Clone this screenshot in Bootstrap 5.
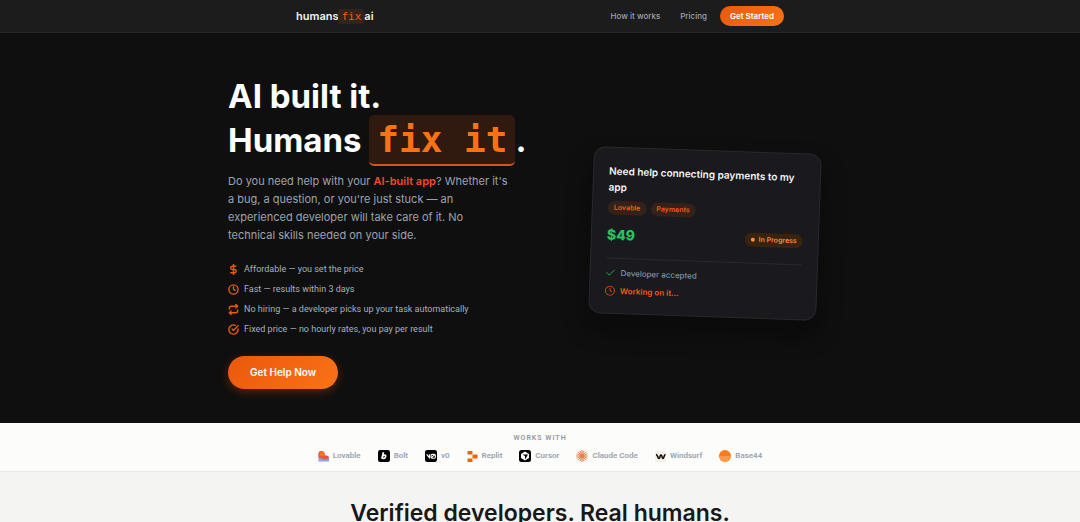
<!DOCTYPE html>
<html lang="en">
<head>
<meta charset="utf-8">
<meta name="viewport" content="width=device-width, initial-scale=1">
<title>humans fix ai</title>
<link href="https://cdn.jsdelivr.net/npm/bootstrap@5.3.0/dist/css/bootstrap.min.css" rel="stylesheet">
<style>
  body { font-family: Inter, "Liberation Sans", sans-serif; font-size: 9px; background: #f4f4f2; color: #18181b; }
  svg { flex: none; }
  .mono { font-family: "DejaVu Sans Mono", monospace; font-weight: 700; }
  .topbar { background: #1c1c1c; border-bottom: 1px solid #262626; height: 33px; }
  .topbar-inner { max-width: 488px; }
  .brand { color: #f1f1f1; font-size: 11px; font-weight: 600; line-height: 16px; text-decoration: none; }
  .brand .mono { color: #f9590f; background: #33231b; border-radius: 3px; padding: 1px 3px; font-weight: 400; }
  .topbar .nav-link { color: #a1a1aa; font-size: 8px; line-height: 12px; font-weight: 500; padding: 0; }
  .topbar .nav-links { column-gap: 20px; margin-right: 13px; }
  .cta { color: #fff; font-weight: 600; border: 0; border-radius: 99px; background: linear-gradient(135deg, #ea580c, #f97316); }
  .cta:hover { color: #fff; background: #ea580c; }
  .cta-nav { font-size: 8px; line-height: 12px; padding: 4px 10px; }
  .cta-main { font-size: 10px; line-height: 15px; padding: 9px 22px; box-shadow: 0 3px 10px rgba(234, 88, 12, .3); }
  .hero { background: #0f0f0f; padding: 41px 0 34px; }
  .hero-inner { max-width: 624px; }
  .hero-inner .row { --bs-gutter-x: 36px; }
  .hero h1 { color: #fff; font-size: 33px; line-height: 44px; font-weight: 700; margin-bottom: 10px; }
  .hero h1 .mono { font-size: 36px; color: #f97316; background: #30190f; border-bottom: 2px solid #d9541a; border-radius: 5px; padding: 4px 8px; }
  .intro { color: #9ca3af; font-size: 11px; line-height: 18px; margin-bottom: 15px; padding-right: 12px; }
  .intro a { color: #f04a2a; font-weight: 600; text-decoration: none; }
  .points { font-family: Roboto, Inter, sans-serif; font-weight: 400; color: #a5afbd; font-size: 9px; line-height: 20px; margin-bottom: 17px; }
  .points li, .steps > div { display: flex; align-items: center; gap: 5px; }
  .points svg, .steps svg { fill: none; stroke-width: 2; stroke-linecap: round; stroke-linejoin: round; }
  .points svg { stroke: #ea580c; stroke-width: 3; }
  .task { width: 228px; padding: 15px; margin-top: 4px; background: #1a1a1e; border: 1px solid #29292d; border-radius: 12px; transform: rotate(2deg); box-shadow: 0 14px 20px 6px rgba(0, 0, 0, .28); }
  .task h2 { color: #f4f4f5; font-size: 10px; line-height: 16px; font-weight: 600; margin-bottom: 6px; }
  .pill { color: #f9590f; background: #33211a; border-radius: 99px; font-size: 7px; line-height: 14px; font-weight: 600; padding: 0 6px; }
  .pill-state { color: #fb8c2c; background: #38230f; }
  .dot { width: 4px; height: 4px; border-radius: 50%; background: #fb923c; }
  .price-row { margin-top: 10px; }
  .price { color: #22c55e; font-size: 14px; line-height: 20px; font-weight: 800; }
  .steps { border-top: 1px solid #29292d; margin-top: 13px; padding-top: 7px; color: #94a3b8; font-size: 8px; line-height: 14px; }
  .steps .now { color: #f9590f; font-weight: 600; margin-top: 4px; }
  .tools { background: #fcfcfa; border-bottom: 1px solid #e8e8e6; padding: 9px 0; }
  .tools h2 { font-family: Roboto, Inter, sans-serif; color: #9299a3; font-size: 7px; line-height: 12px; font-weight: 600; letter-spacing: 1px; margin-bottom: 6px; }
  .tools ul { font-family: Roboto, Inter, sans-serif; color: #9aa3af; font-size: 8px; line-height: 12px; font-weight: 600; column-gap: 17px; }
  .tools li { gap: 4px; }
  .people { padding: 24px 0 48px; }
  .people h2 { font-size: 23px; line-height: 34px; font-weight: 600; color: #18181b; margin: 0; }
</style>
</head>
<body>
<header class="topbar">
  <div class="topbar-inner container-fluid px-0 h-100 d-flex align-items-center">
    <a class="brand me-auto" href="#">humans<span class="mono">fix</span>ai</a>
    <nav class="nav-links d-flex align-items-center">
      <a class="nav-link" href="#how">How it works</a>
      <a class="nav-link" href="#pricing">Pricing</a>
    </nav>
    <button type="button" class="btn cta cta-nav">Get Started</button>
  </div>
</header>

<main>
  <section class="hero">
    <div class="container-fluid px-0 hero-inner">
      <div class="row align-items-center">
        <div class="col-6">
          <h1 class="text-nowrap">AI built it.<br>Humans <span class="mono">fix it</span>.</h1>
          <p class="intro">Do you need help with your <a href="#app">AI-built app</a>? Whether it's a bug, a question, or you're just stuck — an experienced developer will take care of it. No technical skills needed on your side.</p>
          <ul class="points list-unstyled">
            <li><svg width="11" height="11" viewBox="0 0 24 24"><path d="M12 1v22M17 5H9.500a3.500 3.500 0 0 0 0 7h5a3.500 3.500 0 0 1 0 7H6"/></svg>Affordable — you set the price</li>
            <li><svg width="11" height="11" viewBox="0 0 24 24"><circle cx="12" cy="12" r="10"/><path d="M12 6v6l4 2"/></svg>Fast — results within 3 days</li>
            <li><svg width="11" height="11" viewBox="0 0 24 24"><path d="M17 1l4 4-4 4M3 11V9a4 4 0 0 1 4-4h14M7 23l-4-4 4-4M21 13v2a4 4 0 0 1-4 4H3"/></svg>No hiring — a developer picks up your task automatically</li>
            <li><svg width="11" height="11" viewBox="0 0 24 24"><path d="M22 11v1a10 10 0 1 1-6-9.100M22 4L12 14l-3-3"/></svg>Fixed price — no hourly rates, you pay per result</li>
          </ul>
          <button type="button" class="btn cta cta-main">Get Help Now</button>
        </div>
        <div class="col-6 d-flex justify-content-center">
          <article class="task">
            <h2>Need help connecting payments to my app</h2>
            <div class="d-flex gap-1"><span class="pill">Lovable</span><span class="pill">Payments</span></div>
            <div class="price-row d-flex align-items-center justify-content-between">
              <span class="price">$49</span>
              <span class="pill pill-state d-flex align-items-center gap-1"><span class="dot"></span>In Progress</span>
            </div>
            <div class="steps">
              <div><svg width="10" height="10" viewBox="0 0 24 24" stroke="#22c55e"><path d="M21 5L9 18l-6-6"/></svg>Developer accepted</div>
              <div class="now"><svg width="10" height="10" viewBox="0 0 24 24" stroke="#ea580c"><circle cx="12" cy="12" r="11"/><path d="M12 6v6l4 2"/></svg>Working on it...</div>
            </div>
          </article>
        </div>
      </div>
    </div>
  </section>

  <section class="tools text-center">
    <h2>WORKS WITH</h2>
    <ul class="list-unstyled d-flex flex-wrap justify-content-center mb-0">
      <li class="d-flex align-items-center"><svg width="11" height="11" viewBox="0 0 22 22"><path d="M1 6a6 6 0 0 1 12 0v3h3a6 6 0 0 1 6 6v6H1z" fill="#8ea2dc"/><path d="M1 6a6 6 0 0 1 12 0v3h3q5 0 6 6l-8 2-13-4z" fill="#f0523c"/><circle cx="8" cy="6" r="5" fill="#fb7516"/></svg>Lovable</li>
      <li class="d-flex align-items-center"><svg width="12" height="12" viewBox="0 0 22 22"><rect width="22" height="22" rx="4"/><path d="M10 4L7 16M8 13c1-5 7-5 6-1s-6 5-6 1" fill="none" stroke="#fff" stroke-width="3"/></svg>Bolt</li>
      <li class="d-flex align-items-center"><svg width="12" height="12" viewBox="0 0 22 22"><rect width="22" height="22" rx="4"/><path d="M3 8l5 6V8M11 13v-3q0-2 2-2h4q2 0 2 2v3q0 2-2 2h-4q-2 0-2-2M12 14l6-6" fill="none" stroke="#fff" stroke-width="2"/></svg>v0</li>
      <li class="d-flex align-items-center"><svg width="11" height="11" viewBox="0 0 22 22" fill="#f26207"><rect x="1" y="0" width="10" height="7" rx="1"/><rect x="11" y="7" width="10" height="8" rx="1"/><rect x="1" y="15" width="10" height="7" rx="1"/></svg>Replit</li>
      <li class="d-flex align-items-center"><svg width="12" height="12" viewBox="0 0 24 24"><rect width="24" height="24" rx="5"/><path d="M12 3l8 5v8l-8 5-8-5V8z" fill="#fff"/><path d="M7 9h11l-6 10v-7z"/></svg>Cursor</li>
      <li class="d-flex align-items-center"><svg width="12" height="12" viewBox="0 0 24 24" stroke="#e58048" stroke-width="2" stroke-linecap="round"><circle cx="12" cy="12" r="3" fill="#e58048"/><path d="M12 1v22M1 12h22M4 4l16 16M20 4L4 20M8 2l8 20M16 2L8 22M2 8l20 8M2 16l20-8"/></svg>Claude Code</li>
      <li class="d-flex align-items-center"><svg width="11" height="11" viewBox="0 0 22 22"><rect width="22" height="22" rx="3" fill="#f7f0e8"/><path d="M2 7c4 0 3 8 6 8s1-7 4-7 1 7 4 7 1-8 5-8" fill="none" stroke="#000" stroke-width="3"/></svg>Windsurf</li>
      <li class="d-flex align-items-center"><svg width="12" height="12" viewBox="0 0 24 24"><circle cx="12" cy="12" r="12" fill="#ff7a18"/><path d="M1 14h22M2 18h20M6 22h12" stroke="#f9b98a" stroke-width="2"/></svg>Base44</li>
    </ul>
  </section>

  <section class="people text-center">
    <h2>Verified developers. Real humans.</h2>
  </section>
</main>
<script src="https://cdn.jsdelivr.net/npm/bootstrap@5.3.0/dist/js/bootstrap.bundle.min.js"></script>
</body>
</html>
